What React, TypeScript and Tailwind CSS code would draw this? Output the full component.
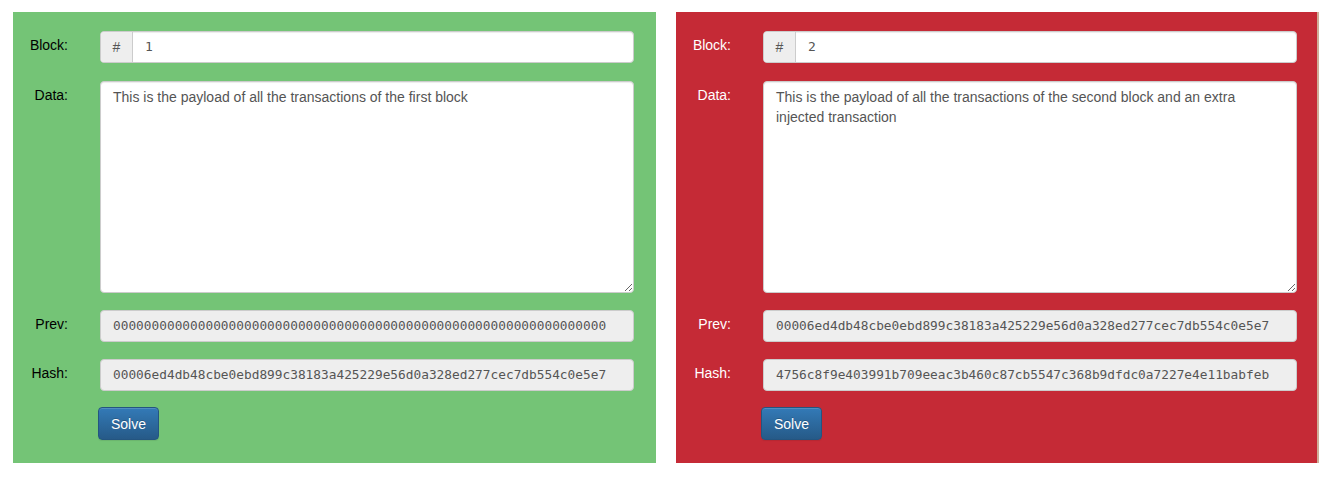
import React from "react";

type BlockProps = {
  num: string;
  data: string;
  prev: string;
  hash: string;
  ok: boolean;
};

const mono = { fontFamily: '"DejaVu Sans Mono", "Liberation Mono", monospace' };

function Label({ children, ok }: { children: React.ReactNode; ok: boolean }) {
  return (
    <div
      className={`w-[55px] shrink-0 pt-[4px] text-right text-[14px] leading-[20px] ${
        ok ? "text-black" : "text-white"
      }`}
    >
      {children}
    </div>
  );
}

function Block({ num, data, prev, hash, ok }: BlockProps) {
  return (
    <div
      className={`w-[643px] shrink-0 flex flex-col pt-[19px] pb-[23px] ${
        ok ? "bg-[#74c476] pr-[22px]" : "bg-[#c52a36] border-r-2 border-[#cfae98] pr-[20px]"
      }`}
      style={{ fontFamily: '"Liberation Sans", Arial, sans-serif' }}
    >
      <div className="flex">
        <Label ok={ok}>Block:</Label>
        <div className="ml-[32px] flex flex-1 h-[32px] rounded-[4px] border border-[#ccc] bg-white overflow-hidden shadow-[inset_0_1px_1px_rgba(0,0,0,0.075)]">
          <div className="w-[32px] shrink-0 flex items-center justify-center bg-[#eee] border-r border-[#ccc] text-[14px] text-[#555]">
            #
          </div>
          <div className="flex items-center pl-[12px] text-[13px] text-[#555]" style={mono}>
            {num}
          </div>
        </div>
      </div>
      <div className="flex mt-[18px]">
        <Label ok={ok}>Data:</Label>
        <textarea
          readOnly
          value={data}
          className="ml-[32px] flex-1 h-[212px] rounded-[4px] border border-[#ccc] bg-white px-[12px] pt-[5px] text-[14px] leading-[20px] text-[#555] outline-none shadow-[inset_0_1px_1px_rgba(0,0,0,0.075)]"
          style={{ fontFamily: '"Liberation Sans", Arial, sans-serif', resize: "vertical" }}
        />
      </div>
      <div className="flex mt-[17px]">
        <Label ok={ok}>Prev:</Label>
        <div
          className="ml-[32px] flex-1 h-[32px] flex items-center rounded-[4px] border border-[#ccc] bg-[#eee] px-[12px] text-[12.8px] text-[#555] overflow-hidden whitespace-nowrap"
          style={mono}
        >
          {prev}
        </div>
      </div>
      <div className="flex mt-[17px]">
        <Label ok={ok}>Hash:</Label>
        <div
          className="ml-[32px] flex-1 h-[32px] flex items-center rounded-[4px] border border-[#ccc] bg-[#eee] px-[12px] text-[12.8px] text-[#555] overflow-hidden whitespace-nowrap"
          style={mono}
        >
          {hash}
        </div>
      </div>
      <div className="flex mt-[16px]">
        <div className="w-[55px] shrink-0" />
        <button
          className="ml-[30px] h-[33px] px-[12px] rounded-[4px] border border-[#245580] bg-gradient-to-b from-[#337ab7] to-[#265a88] text-white text-[14px] leading-[20px] [text-shadow:0_-1px_0_rgba(0,0,0,0.2)] shadow-[inset_0_1px_0_rgba(255,255,255,0.15),0_1px_1px_rgba(0,0,0,0.075)]"
          style={{ fontFamily: '"Liberation Sans", Arial, sans-serif' }}
        >
          Solve
        </button>
      </div>
    </div>
  );
}

export default function App() {
  return (
    <div className="w-[1336px] h-[477px] bg-white pt-[12px] pl-[13px] flex gap-[20px] items-start">
      <Block
        ok
        num="1"
        data="This is the payload of all the transactions of the first block"
        prev="0000000000000000000000000000000000000000000000000000000000000000"
        hash="00006ed4db48cbe0ebd899c38183a425229e56d0a328ed277cec7db554c0e5e7"
      />
      <Block
        ok={false}
        num="2"
        data="This is the payload of all the transactions of the second block and an extra injected transaction"
        prev="00006ed4db48cbe0ebd899c38183a425229e56d0a328ed277cec7db554c0e5e7"
        hash="4756c8f9e403991b709eeac3b460c87cb5547c368b9dfdc0a7227e4e11babfeb"
      />
    </div>
  );
}
